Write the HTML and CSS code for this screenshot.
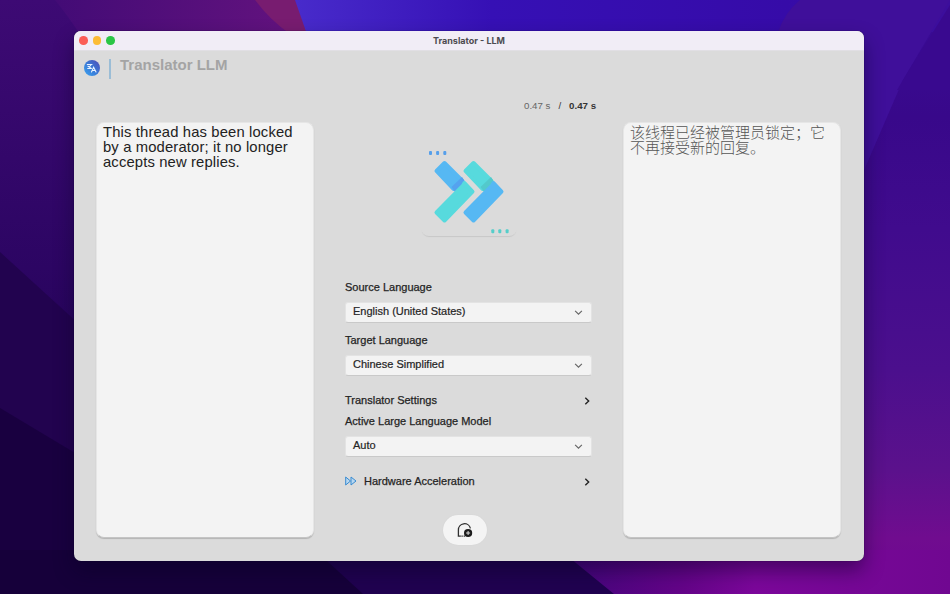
FILE: index.html
```html
<!DOCTYPE html>
<html lang="en">
<head>
<meta charset="utf-8">
<title>Translator - LLM</title>
<link rel="stylesheet" href="styles.css">
</head>
<body>
<svg class="wallpaper" viewBox="0 0 950 594" preserveAspectRatio="none" aria-hidden="true">
  <defs>
    <linearGradient id="base" x1="0" y1="0" x2="0" y2="1"><stop offset="0" stop-color="#3d0a74"/><stop offset=".45" stop-color="#2c0563"/><stop offset="1" stop-color="#190144"/></linearGradient>
    <linearGradient id="top" x1="0" y1="0" x2="1" y2="0"><stop offset="0" stop-color="#430b76"/><stop offset="1" stop-color="#65137f"/></linearGradient>
    <linearGradient id="blue" x1="0" y1="0" x2="1" y2="0"><stop offset="0" stop-color="#482bcb"/><stop offset=".3" stop-color="#3610b5"/><stop offset=".75" stop-color="#360ba8"/><stop offset="1" stop-color="#3c0e9c"/></linearGradient>
    <linearGradient id="right" x1="0" y1="0" x2="0" y2="1"><stop offset="0" stop-color="#390b94"/><stop offset=".15" stop-color="#38088a"/><stop offset=".35" stop-color="#400b8d"/><stop offset=".6" stop-color="#4b0f8d"/><stop offset=".78" stop-color="#5b118c"/><stop offset=".9" stop-color="#700c8f"/><stop offset="1" stop-color="#6d0692"/></linearGradient>
    <linearGradient id="foot" x1="0" y1="0" x2="1" y2="0"><stop offset="0" stop-color="#41057b"/><stop offset=".32" stop-color="#650489"/><stop offset=".5" stop-color="#7c079b"/><stop offset="1" stop-color="#700791"/></linearGradient>
  </defs>
  <rect width="950" height="594" fill="url(#base)"/>
  <path d="M55 0H310V40H83Q75 25 55 0Z" fill="url(#top)"/>
  <path d="M255 0H296L312 34H290Q270 20 255 0Z" fill="#781c70"/>
  <path d="M295 0H950V60H316Z" fill="url(#blue)"/>
  <path d="M850 32H950V594H850Z" fill="url(#right)"/>
  <path d="M800 0H950L903 80L862 175V32H778Q785 12 800 0Z" fill="#3f0f9a"/>
  <path d="M950 5V90H897L903 80Z" fill="#39098f"/>
  <path d="M0 252L80 325V470L0 410Z" fill="#22034f"/>
  <path d="M0 408L80 456V594H0Z" fill="#190040"/>
  <path d="M0 550H575L620 594H0Z" fill="#16003a"/>
  <path d="M315 550L363 594H620L565 550Z" fill="#200250"/>
  <path d="M560 550H950V594H614Z" fill="url(#foot)"/>
</svg>
<main class="window">
  <header class="titlebar">
    <div class="lights"><i class="light red"></i><i class="light yellow"></i><i class="light green"></i></div>
    <span class="title">Translator - LLM</span>
  </header>
  <div class="brand">
    <svg class="logo" viewBox="0 0 16 16" aria-hidden="true">
      <defs><linearGradient id="lg" x1="0" y1="1" x2="1" y2="0"><stop offset="0" stop-color="#3ba4f0"/><stop offset=".5" stop-color="#3978d6"/><stop offset="1" stop-color="#5149b4"/></linearGradient></defs>
      <circle cx="8" cy="8" r="8" fill="url(#lg)"/>
      <g fill="none" stroke="#e9f2ff" stroke-width="1.1" stroke-linecap="round"><path d="M3.3 4.5H8M4 6.2l3.4 2.2M7 5L4 8.5H7"/><path d="M7.5 12L9.6 7.2L12 12M8.3 10.5H11.2"/></g>
    </svg>
    <i class="divider"></i>
    <h1 class="name">Translator LLM</h1>
  </div>
  <div class="workspace">
    <section class="panel source">This thread has been locked<br>by a moderator; it no longer<br>accepts new replies.</section>
    <section class="controls">
      <div class="timing"><span class="elapsed">0.47 s</span><span class="slash">/</span><b>0.47 s</b></div>
      <div class="emblem">
        <svg viewBox="0 0 96 90" aria-hidden="true">
          <g stroke-width="4" stroke-linejoin="round">
            <path d="M15.5 25L23.5 17L41.5 35L32.5 43Z" fill="#56b8f3" stroke="#56b8f3"/>
            <path d="M30.5 41L41 31L44 36L34 46Z" fill="#55a2ef"/>
            <path d="M15.5 66.5L42.2 39.5L43.5 37L51.5 45.5L23.5 74.5Z" fill="#57dadd" stroke="#57dadd"/>
            <path d="M44.5 25L52.5 17L70.5 35L61.5 43Z" fill="#57dadd" stroke="#57dadd"/>
            <path d="M59.5 41L70 31L73 36L63 46Z" fill="#53c9cb"/>
            <path d="M44.5 66.5L71.2 39.5L72.5 37L80.5 45.5L52.5 74.5Z" fill="#56b8f3" stroke="#56b8f3"/>
          </g>
          <g fill="#569fea"><rect x="8" y="5" width="3" height="4" rx="1"/><rect x="15.1" y="5" width="3" height="4" rx="1"/><rect x="22.3" y="5" width="3" height="4" rx="1"/></g>
          <g fill="#55ceca"><rect x="70.3" y="83.3" width="3" height="4" rx="1"/><rect x="77.3" y="83.3" width="3" height="4" rx="1"/><rect x="84.6" y="83.3" width="3" height="4" rx="1"/></g>
        </svg>
      </div>
      <div class="form">
        <div class="label">Source Language</div>
        <div class="select"><span>English (United States)</span><svg class="down" viewBox="0 0 8 8"><path d="M1 2.5L4 5.5L7 2.5"/></svg></div>
        <div class="label target">Target Language</div>
        <div class="select"><span>Chinese Simplified</span><svg class="down" viewBox="0 0 8 8"><path d="M1 2.5L4 5.5L7 2.5"/></svg></div>
        <div class="row settings"><span>Translator Settings</span><svg class="next" viewBox="0 0 8 10"><path d="M2.3 1.7L5.7 5L2.3 8.3"/></svg></div>
        <div class="label model">Active Large Language Model</div>
        <div class="select"><span>Auto</span><svg class="down" viewBox="0 0 8 8"><path d="M1 2.5L4 5.5L7 2.5"/></svg></div>
        <div class="row hardware"><svg class="forward" viewBox="0 0 12 10"><path d="M.7 1V9L5.5 5ZM6 1V9L11 5Z"/></svg><span>Hardware Acceleration</span><svg class="next" viewBox="0 0 8 10"><path d="M2.3 1.7L5.7 5L2.3 8.3"/></svg></div>
      </div>
      <button class="chat" aria-label="New translation"><svg viewBox="0 0 16 16"><path d="M3.4 14.2H1.4V8A6.1 6.1 0 0 1 13.4 6.3" fill="none" stroke="#303030" stroke-width="1.3"/><path d="M3.4 14.2H8" stroke="#303030" stroke-width="1.2" stroke-dasharray="1.2 .6"/><circle cx="11.1" cy="11" r="4.1" fill="#1b1b1b"/><path d="M9.1 11H13.1M11.1 9V13" stroke="#ddd" stroke-width="1"/></svg></button>
    </section>
    <section class="panel result" lang="zh-CN">该线程已经被管理员锁定；它<br>不再接受新的回复。</section>
  </div>
</main>
</body>
</html>
```
FILE: styles.css
```css
* { box-sizing: border-box; }
body { margin: 0; width: 950px; height: 594px; overflow: hidden; padding: 31px 86px 33px 74px; font: 11px/14px "Liberation Sans", Arial, sans-serif; color: #242424; }
.wallpaper { position: absolute; inset: 0; width: 950px; height: 594px; z-index: -1; }
.window { height: 530px; width: 790px; border-radius: 7px; background: #dbdbdb; overflow: hidden; box-shadow: 0 0 1px #090022, 0 10px 20px rgba(8,0,35,.45); display: flex; flex-direction: column; }
.titlebar { height: 20px; flex: none; background: #f1edf6; border-bottom: 1px solid #e1dfe4; display: grid; grid-template-columns: 1fr auto 1fr; align-items: center; padding: 0 5px; }
.lights { display: flex; gap: 5px; }
.light { width: 8.7px; height: 8.7px; border-radius: 50%; }
.red { background: #fb5e57; }
.yellow { background: #fcbc35; }
.green { background: #2bc646; }
.title { font: 700 9px/14px Inter, sans-serif; color: #4d4b50; }
.brand { display: flex; height: 71px; flex: none; padding: 7px 10px; align-items: flex-start; }
.logo { width: 16px; height: 16px; margin-top: 2px; }
.divider { width: 2px; height: 20px; margin: 1px 0 0 9px; background: #9bbdd6; }
.name { margin: -2px 0 0 9px; font-size: 15px; line-height: 18px; color: #a4a4a4; white-space: nowrap; }
.workspace { flex: 1; display: grid; grid-template-columns: 218px 247px 218px; column-gap: 31px; padding: 0 23px 22px 22px; }
.panel { margin-bottom: 6px; height: 416px; background: #f3f3f3; border-radius: 8px; border: 1px solid #e6e6e6; border-bottom-color: #c4c4c4; box-shadow: 0 1px 1px rgba(0,0,0,.18); padding: 2px 6px; font-size: 14.5px; line-height: 15px; color: #222; white-space: nowrap; }
.source { font-size: 14.8px; letter-spacing: .14px; }
.result { padding-top: 1px; font-family: "Noto Sans CJK SC", sans-serif; font-weight: 300; font-size: 15px; color: #555; }
.controls { display: flex; flex-direction: column; min-width: 0; }
.timing { height: 14px; margin: -23px 0 0 179px; display: flex; font-size: 9.7px; white-space: nowrap; color: #666; }
.slash { margin: 0 8px; color: #333; }
.timing b { color: #333; }
.emblem { width: 96px; height: 90px; margin: 33px 0 0 76px; border-radius: 8px; box-shadow: 0 2px 1px -1px rgba(0,0,0,.09); }
.emblem svg { display: block; width: 96px; height: 90px; }
.form { margin-top: 44px; height: 210px; }
.label { height: 14px; -webkit-text-stroke: .25px #242424; }
.select { height: 21px; margin-top: 8px; border-radius: 3px; background: #f3f3f3; border: 1px solid #e3e3e3; border-bottom-color: #c9c9c9; display: flex; justify-content: space-between; align-items: center; padding: 0 8px 4px 7px; -webkit-text-stroke: .2px #242424; }
.target { margin-top: 10px; }
.settings { margin-top: 17px; }
.model { margin-top: 7px; }
.row { height: 14px; display: flex; align-items: center; -webkit-text-stroke: .25px #242424; }
.hardware { margin-top: 17px; }
.down { width: 9px; height: 9px; margin-top: 4px; }
.down path { fill: none; stroke: #666; stroke-width: 1; }
.next { width: 8px; height: 10px; margin: 1px 1px 0 auto; }
.next path { fill: none; stroke: #242424; stroke-width: 1.4; }
.forward { width: 12px; height: 10px; margin-right: 7px; }
.forward path { fill: #b7d7f1; stroke: #398bd0; stroke-width: 1; }
.chat { border: 0; background: #f4f4f4; width: 44px; height: 30px; border-radius: 15px; padding: 0; margin: 25px 0 0 98px; display: grid; place-items: center; box-shadow: 0 0 1px #ccc; }
.chat svg { width: 16px; height: 16px; }
```
